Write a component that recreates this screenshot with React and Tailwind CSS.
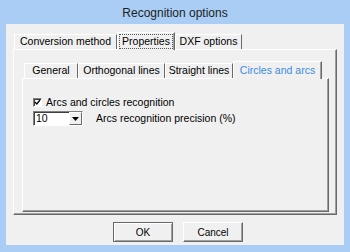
import React from "react";

const font = { fontFamily: '"Liberation Sans", Arial, sans-serif' };

const OuterTab = ({ label, width, selected }) =>
  selected ? (
    <div
      className={`relative z-10 -mb-[1px] h-[18px] flex items-center justify-center bg-[#f0f0f0] border-l border-t border-white border-r border-r-[#696969] shadow-[inset_-1px_0_0_#a0a0a0] ${width}`}
    >
      <span className="px-[2px] leading-[13px] border border-dotted border-[#555]">
        {label}
      </span>
    </div>
  ) : (
    <div
      className={`h-[15px] flex items-center justify-center bg-[#f0f0f0] border-l border-t border-white border-r border-r-[#696969] ${width}`}
    >
      {label}
    </div>
  );

const InnerTab = ({ label, width, selected }) =>
  selected ? (
    <div
      className={`relative z-10 -mb-[1px] h-[18px] flex items-center justify-center bg-[#f0f0f0] text-[#3a8be0] border-l border-t border-white border-r border-r-[#696969] shadow-[inset_-1px_0_0_#a0a0a0] ${width}`}
    >
      {label}
    </div>
  ) : (
    <div
      className={`h-[15px] flex items-center justify-center bg-[#f0f0f0] border-l border-t border-white border-r border-r-[#696969] ${width}`}
    >
      {label}
    </div>
  );

const Button = ({ label, isDefault }) => (
  <div
    className={`w-[60px] h-[20px] flex items-center justify-center text-[10px] bg-[#f0f0f0] ${
      isDefault
        ? "border border-[#696969] shadow-[inset_1px_1px_0_#fff,inset_-1px_-1px_0_#a0a0a0]"
        : "border-l border-t border-white border-r border-b border-r-[#696969] border-b-[#696969] shadow-[inset_-1px_-1px_0_#a0a0a0]"
    }`}
  >
    {label}
  </div>
);

export default function App() {
  return (
    <div
      className="w-[350px] h-[252px] bg-[#a9cdf4] flex flex-col px-[6px] pb-[7px] text-[10.5px] text-black"
      style={font}
    >
      {/* Title bar */}
      <div className="h-[24px] flex items-center justify-center text-[12px] text-[#1e1e1e] pt-[1px]">
        Recognition options
      </div>

      {/* Client area */}
      <div className="flex-1 bg-[#f0f0f0] flex flex-col px-[7px] pt-[8px]">
        {/* Outer tab strip */}
        <div className="flex items-end h-[17px] pl-[1px]">
          <OuterTab label="Conversion method" width="w-[103px]" />
          <OuterTab label="Properties" width="w-[58px]" selected />
          <OuterTab label="DXF options" width="w-[67px]" />
        </div>

        {/* Outer panel */}
        <div className="h-[166px] border-l border-t border-white border-r border-b border-r-[#696969] border-b-[#696969] shadow-[inset_-1px_-1px_0_#a0a0a0] flex flex-col pl-[8px] pr-[7px] pt-[11px]">
          {/* Inner tab strip */}
          <div className="flex items-end h-[17px] pl-[2px]">
            <InnerTab label="General" width="w-[54px]" />
            <InnerTab label="Orthogonal lines" width="w-[87px]" />
            <InnerTab label="Straight lines" width="w-[68px]" />
            <InnerTab label="Circles and arcs" width="w-[89px]" selected />
          </div>

          {/* Inner panel */}
          <div className="h-[134px] border-l border-t border-white border-r border-b border-r-[#696969] border-b-[#696969] shadow-[inset_-1px_-1px_0_#a0a0a0] flex flex-col pl-[10px] pt-[18px]">
            <div className="flex items-center h-[11px]">
              <div className="w-[9px] h-[9px] bg-white border-l border-t border-[#808080] border-r border-b border-r-white border-b-white shadow-[inset_1px_1px_0_#404040] flex items-center justify-center">
                <svg width="7" height="7" viewBox="0 0 7 7">
                  <path d="M1 3 L2.8 5 L6 1" stroke="#000" strokeWidth="1.3" fill="none" />
                </svg>
              </div>
              <span className="ml-[4px]">Arcs and circles recognition</span>
            </div>

            <div className="flex items-center mt-[3px] h-[15px]">
              <div className="w-[50px] h-[15px] bg-white border-l border-t border-[#808080] border-r border-b border-r-white border-b-white shadow-[inset_1px_1px_0_#404040] flex items-center">
                <span className="flex-1 pl-[2px] leading-none">10</span>
                <div className="w-[13px] h-[13px] bg-[#f0f0f0] border-l border-t border-white border-r border-b border-r-[#696969] border-b-[#696969] flex items-center justify-center">
                  <svg width="7" height="4" viewBox="0 0 7 4">
                    <path d="M0 0 H7 L3.5 4 Z" fill="#000" />
                  </svg>
                </div>
              </div>
              <span className="ml-[13px]">Arcs recognition precision (%)</span>
            </div>
          </div>
        </div>

        {/* Buttons */}
        <div className="flex justify-center gap-[10px] mt-[7px] pl-[6px]">
          <Button label="OK" isDefault />
          <Button label="Cancel" />
        </div>
      </div>
    </div>
  );
}
